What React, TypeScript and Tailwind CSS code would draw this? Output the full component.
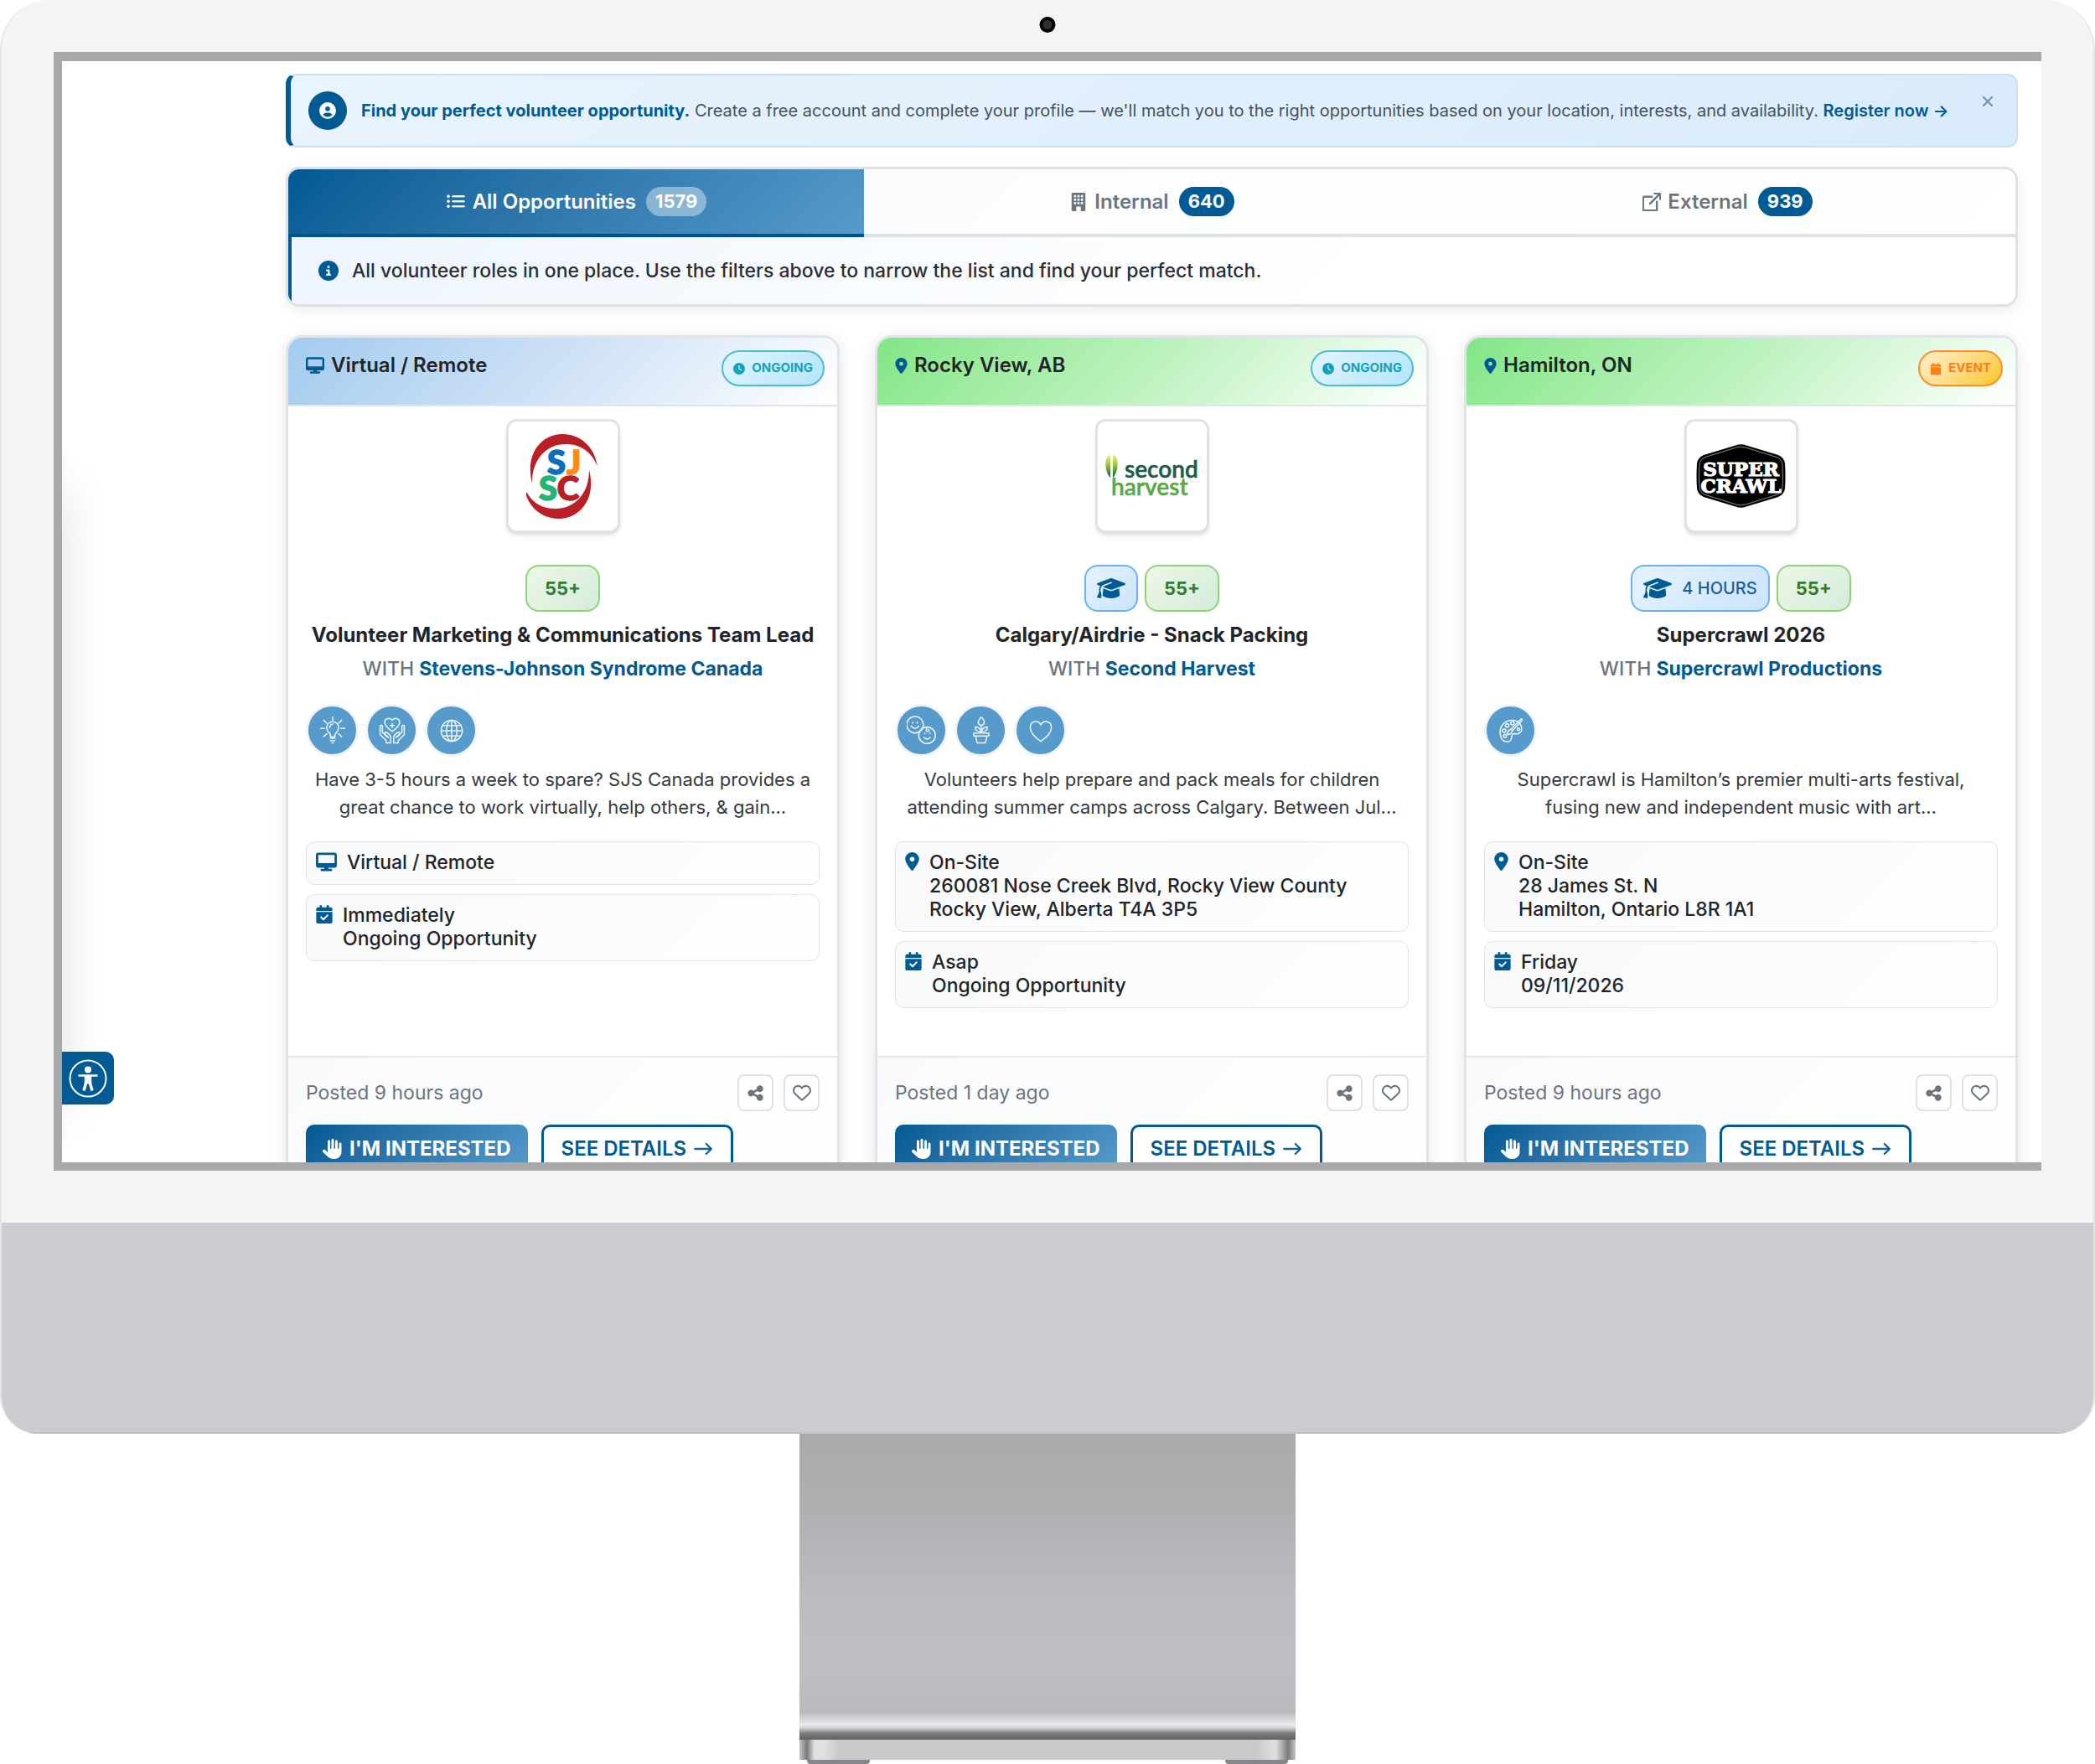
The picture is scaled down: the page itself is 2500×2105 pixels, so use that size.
import type { ReactNode } from 'react'
import {
  FaCalendar,
  FaCalendarCheck,
  FaCircleInfo,
  FaCircleUser,
  FaClock,
  FaDesktop,
  FaGraduationCap,
  FaHand,
  FaLocationDot,
  FaRegHeart,
  FaShareNodes,
} from 'react-icons/fa6'
import { BsArrowRight, BsBoxArrowUpRight, BsBuildingFill, BsListUl } from 'react-icons/bs'
import { X } from 'lucide-react'

type CauseName = 'idea' | 'care' | 'globe' | 'kids' | 'plant' | 'heart' | 'art'

interface Opportunity {
  place: string
  remote: boolean
  kind: 'ongoing' | 'event'
  logo: ReactNode
  training?: string
  title: string
  org: string
  causes: CauseName[]
  summary: string
  where: string[]
  when: string[]
  posted: string
}

function SjscLogo() {
  return (
    <svg viewBox="0 0 88 101" className="w-[88px]" role="img" aria-label="SJSC">
      <path
        d="M7 58C-2 24 18 0 43 0c22 0 38 15 42 38C77 20 64 12 47 12 24 12 7 30 7 58z"
        fill="#b91f24"
      />
      <path
        d="M7 58C-2 24 18 0 43 0c22 0 38 15 42 38C77 20 64 12 47 12 24 12 7 30 7 58z"
        fill="#b91f24"
        transform="rotate(180 41 50.5)"
      />
      <g fontFamily="Lato, sans-serif" fontWeight="900" fontSize="40" textAnchor="middle" strokeWidth="1.500">
        <text x="36" y="48" fill="#0b6fbd" stroke="#0b6fbd">S</text>
        <text x="57" y="48" fill="#ff8c1a" stroke="#ff8c1a">J</text>
        <text x="26" y="79" fill="#22b573" stroke="#22b573">S</text>
        <text x="50" y="79" fill="#b91f24" stroke="#b91f24">C</text>
      </g>
    </svg>
  )
}

function SecondHarvestLogo() {
  return (
    <svg viewBox="0 0 116 56" className="w-[116px]" role="img" aria-label="Second Harvest">
      <defs>
        <linearGradient id="leaf" x1="0" y1="0" x2="0" y2="1">
          <stop offset="0" stopColor="#f0ec8a" />
          <stop offset="0.4" stopColor="#a5c93c" />
          <stop offset="1" stopColor="#0c5a44" />
        </linearGradient>
      </defs>
      <path d="M8 3C0 3 1 24 8 30z" fill="url(#leaf)" />
      <path d="M11 3c8 0 7 21 0 27z" fill="url(#leaf)" />
      <g fontFamily="Lato, sans-serif" fontWeight="600" fontSize="28">
        <text x="25" y="30" fill="#1d5c45" stroke="#1d5c45" strokeWidth="0.5">
          second
        </text>
        <text x="9" y="51" fill="#5aa947" stroke="#5aa947" strokeWidth="0.5">
          harvest
        </text>
      </g>
    </svg>
  )
}

function SupercrawlLogo() {
  return (
    <svg viewBox="0 0 107 76" className="w-[107px]" role="img" aria-label="Super Crawl">
      <path
        d="M47 1.500Q53.500 -1 60 1.500L98 13Q105 16 106 23Q107 38 106 53Q105 60 98 63L60 74.500Q53.500 77 47 74.500L9 63Q2 60 1 53Q0 38 1 23Q2 16 9 13Z"
        fill="#000"
      />
      <path
        d="M48 4Q53.500 2 59 4L96 15.500Q102 18 103 24Q104 38 103 52Q102 58 96 60.500L59 72Q53.500 74 48 72L11 60.500Q5 58 4 52Q3 38 4 24Q5 18 11 15.500Z"
        fill="none"
        stroke="#8a8a8a"
        strokeWidth="1"
      />
      <g
        fontFamily="DejaVu Serif, serif"
        fontWeight="700"
        fontSize="23"
        textAnchor="middle"
        fill="#fff"
        stroke="#fff"
        strokeWidth="1.200"
      >
        <text x="53.500" y="38">SUPER</text>
        <text x="53.500" y="58">CRAWL</text>
      </g>
    </svg>
  )
}

const causePaths: Record<CauseName, ReactNode> = {
  idea: (
    <>
      <path d="M16 24v-2c0-3-5-5-5-10a8 8 0 0 1 16 0c0 5-5 7-5 10v2z" transform="translate(-1 2)" />
      <path d="M15 28h6M15 31h6M17 34h2M14 14q0-4 4-5" />
      <path d="M18 0v4M2 15h5M29 15h5M6 4l4 4M30 4l-4 4M6 26l4-4M30 26l-4-4" />
    </>
  ),
  care: (
    <>
      <path d="M18 19c-4-3-10-7-10-12a5.500 5.500 0 0 1 10-3 5.500 5.500 0 0 1 10 3c0 5-6 9-10 12z" />
      <path d="M18 8.500v5M15.500 11h5" />
      <path d="M2 11q2-1 3 1v8l6 6M2 11v12l8 8v3h6v-7q0-4-6-7-3 0-1 3l4 4" />
      <path d="M34 11q-2-1-3 1v8l-6 6M34 11v12l-8 8v3h-6v-7q0-4 6-7 3 0 1 3l-4 4" />
    </>
  ),
  globe: (
    <>
      <circle cx="18" cy="18" r="14" />
      <ellipse cx="18" cy="18" rx="7" ry="14" />
      <path d="M18 4v28M4 18h28M6.500 11h23M6.500 25h23" />
    </>
  ),
  kids: (
    <>
      <circle cx="9" cy="10" r="11" />
      <path d="M6 7v1M12 7v1M4 12q5 6 10 0" />
      <circle cx="25" cy="24" r="11" />
      <path d="M22 21v1M29 21v1M21 27q4 4 8 0M25 14q-3 4 1 5 3-1 1-3" />
    </>
  ),
  plant: (
    <>
      <path d="M8 21h20v4H8zM10.500 25l2 9h11l2-9M18 21V11" />
      <path d="M18 11q-8-3 0-11 8 8 0 11zM18 19q-8 1-8-6 6 0 8 6q2-6 8-6 0 7-8 6" />
    </>
  ),
  heart: <path d="M18 32C9 26 4 20 4 13.500c0-9 11-10 14-3 3-7 14-6 14 3C32 20 27 26 18 32z" />,
  art: (
    <>
      <path d="M16 32c-6 2-11-1-12-9C2 12 10 4 20 4c8 0 13 6 12 13-1 6-6 5-10 5-5 0-1 8-6 10z" />
      <circle cx="13" cy="11" r="2.300" />
      <circle cx="20" cy="8" r="2.300" />
      <circle cx="9" cy="18" r="2.300" />
      <circle cx="10" cy="25" r="2" />
      <circle cx="28" cy="16" r="1.600" />
      <path d="M32 2L18 16l2 2L33 4zM18 16q-4 1-5 7 6 0 7-5" />
    </>
  ),
}

const opportunities: Opportunity[] = [
  {
    place: 'Virtual / Remote',
    remote: true,
    kind: 'ongoing',
    logo: <SjscLogo />,
    title: 'Volunteer Marketing & Communications Team Lead',
    org: 'Stevens-Johnson Syndrome Canada',
    causes: ['idea', 'care', 'globe'],
    summary: 'Have 3-5 hours a week to spare? SJS Canada provides a great chance to work virtually, help others, & gain...',
    where: ['Virtual / Remote'],
    when: ['Immediately', 'Ongoing Opportunity'],
    posted: 'Posted 9 hours ago',
  },
  {
    place: 'Rocky View, AB',
    remote: false,
    kind: 'ongoing',
    logo: <SecondHarvestLogo />,
    training: '',
    title: 'Calgary/Airdrie - Snack Packing',
    org: 'Second Harvest',
    causes: ['kids', 'plant', 'heart'],
    summary: 'Volunteers help prepare and pack meals for children attending summer camps across Calgary. Between Jul...',
    where: ['On-Site', '260081 Nose Creek Blvd, Rocky View County', 'Rocky View, Alberta T4A 3P5'],
    when: ['Asap', 'Ongoing Opportunity'],
    posted: 'Posted 1 day ago',
  },
  {
    place: 'Hamilton, ON',
    remote: false,
    kind: 'event',
    logo: <SupercrawlLogo />,
    training: '4 HOURS',
    title: 'Supercrawl 2026',
    org: 'Supercrawl Productions',
    causes: ['art'],
    summary: 'Supercrawl is Hamilton’s premier multi-arts festival, fusing new and independent music with art...',
    where: ['On-Site', '28 James St. N', 'Hamilton, Ontario L8R 1A1'],
    when: ['Friday', '09/11/2026'],
    posted: 'Posted 9 hours ago',
  },
]

function RegisterBanner() {
  return (
    <div className="flex items-center rounded-xl border-2 border-l-[6px] border-[#c3e1f7] border-l-[#005a93] bg-linear-135 from-[#e8f4fe] to-[#d9ebfa] py-[19px] pl-[21px] pr-6">
      <span className="flex size-[46px] shrink-0 items-center justify-center rounded-full bg-[#005a93] text-white">
        <FaCircleUser className="size-5" />
      </span>
      <p className="ml-[17px] flex-1 text-[20px] leading-8 text-[#45525f]">
        <strong className="font-bold text-[#005a93]">Find your perfect volunteer opportunity.</strong>{' '}
        Create a free account and complete your profile — we'll match you to the right opportunities
        based on your location, interests, and availability.{' '}
        <a href="#register" className="font-semibold text-[#005a93]">
          Register now →
        </a>
      </p>
      <button type="button" aria-label="Dismiss" className="self-start pt-[2px] text-[#6f93b8]">
        <X className="size-5" strokeWidth={2.5} />
      </button>
    </div>
  )
}

function Tabs() {
  const idle = 'flex items-center justify-center gap-2 border-b-4 border-[#dee2e6] text-[#6c757d]'
  const count = 'ml-1 rounded-full bg-[#005a93] px-[11px] text-[22px] leading-[35px] font-bold text-white'

  return (
    <div className="mt-[23px] overflow-hidden rounded-2xl border-3 border-[#dee2e6] bg-white shadow-[0_4px_16px_rgba(0,0,0,0.08)]">
      <div className="grid h-[81px] grid-cols-3 bg-linear-135 from-[#fafbfc] to-white text-[24px] font-semibold">
        <button
          type="button"
          className="flex items-center justify-center gap-2 border-b-4 border-[#00528a] bg-linear-135 from-[#005a93] to-[#559bcb] text-white"
        >
          <BsListUl className="size-6" strokeWidth={0.5} />
          All Opportunities
          <span className="ml-1 rounded-full bg-white/40 px-[11px] text-[22px] leading-[35px] font-bold">
            1579
          </span>
        </button>
        <button type="button" className={idle}>
          <BsBuildingFill className="size-[22px]" />
          Internal
          <span className={count}>640</span>
        </button>
        <button type="button" className={idle}>
          <BsBoxArrowUpRight className="size-[22px]" strokeWidth={0.8} />
          External
          <span className={count}>939</span>
        </button>
      </div>
      <div className="flex h-20 items-center gap-4 border-l-4 border-[#005a93] bg-linear-135 from-[#eef5fe] to-white to-60% pl-8">
        <FaCircleInfo className="size-6 text-[#005a93]" />
        <p className="text-[23px] font-medium text-[#2b2f33]">
          All volunteer roles in one place. Use the filters above to narrow the list and find your
          perfect match.
        </p>
      </div>
    </div>
  )
}

function KindBadge({ kind }: { kind: Opportunity['kind'] }) {
  if (kind === 'event') {
    return (
      <span className="flex h-[43px] items-center gap-2 rounded-full border-2 border-[#fd8f2f] bg-linear-135 from-[#fff0c8] to-[#ffc60d] px-3 text-[15px] font-bold text-[#fd7e14]">
        <FaCalendar className="size-[14px]" />
        EVENT
      </span>
    )
  }
  return (
    <span className="flex h-[43px] items-center gap-2 rounded-full border-2 border-[#4dbccd] bg-linear-135 from-[#e1f5fe] to-[#b3e5fc] px-3 text-[15px] font-bold text-[#17a2b8]">
      <FaClock className="size-[14px]" />
      ONGOING
    </span>
  )
}

function InfoBox({ icon, lines }: { icon: ReactNode; lines: string[] }) {
  return (
    <div className="flex gap-3 rounded-[10px] border border-[#dfe3e8] bg-linear-135 from-[#f8f9fa] to-[#fefefe] px-[11px] pt-[10px] pb-3 text-[23px] leading-7 font-medium text-[#212529]">
      <span className="pt-[2px] text-[#005a93]">{icon}</span>
      <div>
        {lines.map((line) => (
          <p key={line}>{line}</p>
        ))}
      </div>
    </div>
  )
}

function OpportunityCard({ item }: { item: Opportunity }) {
  return (
    <article className="flex flex-col overflow-hidden rounded-[20px] border-3 border-[#e1e5ea] bg-white shadow-[0_4px_20px_rgba(0,0,0,0.1)]">
      <header
        className={
          item.remote
            ? 'flex h-[82px] items-start border-b-2 border-[#e1e5ea] bg-linear-135 from-[#a3cbef] via-[#cfe2f6] to-white pt-[15px] pl-[21px] pr-[15px]'
            : 'flex h-[82px] items-start border-b-2 border-[#e1e5ea] bg-linear-135 from-[#82e686] via-[#bdf2bf] to-white pt-[15px] pl-[21px] pr-[15px]'
        }
      >
        <h3 className="flex flex-1 items-center gap-2 text-[24px] leading-9 font-semibold text-[#212529]">
          {item.remote ? (
            <FaDesktop className="h-5 w-[22px] text-[#005a93]" />
          ) : (
            <FaLocationDot className="h-[19px] w-[15px] text-[#005a93]" />
          )}
          {item.place}
        </h3>
        <KindBadge kind={item.kind} />
      </header>

      <div className="flex flex-1 flex-col px-[21px] pt-[15px] pb-[57px]">
        <div className="flex size-[136px] items-center justify-center self-center rounded-xl border-3 border-[#dfe3e8] bg-white shadow-md">
          {item.logo}
        </div>

        {/* Requirements */}
        <div className="mt-[38px] flex justify-center gap-2">
          {item.training !== undefined && (
            <span className="flex h-14 items-center gap-3 rounded-2xl border-2 border-[#66b2ff] bg-linear-135 from-[#e5f3ff] to-[#cce4ff] px-[13px] text-[20px] font-medium text-[#1a5f99]">
              <FaGraduationCap className="h-[30px] w-[34px] text-[#005a93]" />
              {item.training}
            </span>
          )}
          <span className="flex h-14 items-center rounded-2xl border-2 border-[#8fd47a] bg-linear-135 from-[#eef6e6] to-[#d4ecdb] px-[21px] text-[22px] font-bold text-[#2e7d32]">
            55+
          </span>
        </div>

        <h2 className="mt-3 text-center text-[24px] leading-8 font-bold whitespace-nowrap text-[#212529]">
          {item.title}
        </h2>
        <p className="mt-2 text-center text-[23px] leading-8 font-medium text-[#6c757d]">
          WITH{' '}
          <a href="#organization" className="font-bold text-[#005a93]">
            {item.org}
          </a>
        </p>

        {/* Causes */}
        <div className="mt-[26px] flex gap-2">
          {item.causes.map((cause) => (
            <span
              key={cause}
              className="flex size-[63px] items-center justify-center rounded-full border-3 border-[#f1f5f9] bg-[#579bcc]"
            >
              <svg
                viewBox="-2 -2 40 40"
                className="size-9"
                fill="none"
                stroke="#eaf4fb"
                strokeWidth="1.700"
                strokeLinecap="round"
                strokeLinejoin="round"
                aria-hidden="true"
              >
                {causePaths[cause]}
              </svg>
            </span>
          ))}
        </div>

        <p className="mt-[11px] px-2 text-center text-[22px] leading-[33px] text-[#343a40]">{item.summary}</p>

        <div className="mt-6 flex flex-col gap-[11px]">
          <InfoBox
            icon={
              item.remote ? (
                <FaDesktop className="h-[23px] w-[25px]" />
              ) : (
                <FaLocationDot className="h-[22px] w-[17px]" />
              )
            }
            lines={item.where}
          />
          <InfoBox icon={<FaCalendarCheck className="h-[22px] w-5" />} lines={item.when} />
        </div>
      </div>

      <footer className="border-t-2 border-[#e5e8ec] bg-linear-135 from-[#f8fafc] to-white px-[21px] pt-5 pb-5">
        <div className="flex items-center gap-3 text-[#6c757d]">
          <span className="flex-1 text-[23px]">{item.posted}</span>
          <button
            type="button"
            aria-label="Share"
            className="flex h-11 w-[43px] items-center justify-center rounded-lg border-2 border-[#dee2e6] bg-white"
          >
            <FaShareNodes className="size-[21px]" />
          </button>
          <button
            type="button"
            aria-label="Save"
            className="flex h-11 w-[43px] items-center justify-center rounded-lg border-2 border-[#dee2e6] bg-white"
          >
            <FaRegHeart className="size-[22px]" />
          </button>
        </div>
        <div className="mt-4 flex gap-4 text-[24px] font-bold">
          <button
            type="button"
            className="flex h-[58px] items-center gap-2 rounded-[10px] bg-linear-135 from-[#005a93] to-[#559bcb] px-5 text-white"
          >
            <FaHand className="size-6" />
            I'M INTERESTED
          </button>
          <a
            href="#details"
            className="flex h-[58px] items-center gap-2 rounded-[10px] border-3 border-[#005a93] bg-white px-[21px] font-semibold text-[#005a93]"
          >
            SEE DETAILS
            <BsArrowRight className="size-6" strokeWidth={0.6} />
          </a>
        </div>
      </footer>
    </article>
  )
}

function AccessibilityButton() {
  return (
    <button
      type="button"
      aria-label="Accessibility options"
      className="absolute bottom-[69px] left-0 flex h-[63px] w-[62px] items-center justify-center rounded-r-[10px] bg-[#005a93]"
    >
      <svg viewBox="0 0 46 46" className="size-[46px]" aria-hidden="true">
        <circle cx="23" cy="23" r="21.500" fill="none" stroke="#fff" strokeWidth="2" />
        <circle cx="23" cy="12.500" r="4" fill="#fff" />
        <path
          d="M12.500 19.500h21M20 20h6v8h-6z"
          fill="#fff"
          stroke="#fff"
          strokeWidth="2.500"
          strokeLinecap="round"
        />
        <path d="M21 27l-3 10.500M25 27l3 10.500" stroke="#fff" strokeWidth="3.500" />
      </svg>
    </button>
  )
}

export default function App() {
  return (
    <div className="w-full bg-white font-['Inter',sans-serif]">
      {/* Monitor */}
      <div className="overflow-hidden rounded-t-[60px] rounded-b-[45px] border-x-2 border-[#e3e4e5]">
        <div className="relative bg-[#f4f4f4] px-[62px] py-[62px]">
          <span className="absolute top-5 left-1/2 size-[19px] -translate-x-1/2 rounded-full border-4 border-black bg-[#2d2f31]" />
          <main className="relative aspect-[2372/1335] overflow-hidden border-t-[11px] border-b-[10px] border-l-[10px] border-[#a8a8a8] bg-white pt-[15px] pr-7 pl-[267px]">
            {/* Collapsed side panel, only its shadow shows */}
            <div className="absolute bottom-16 -left-10 h-[740px] w-10 shadow-[0_0_60px_rgba(0,0,0,0.14)]" />
            <RegisterBanner />
            <Tabs />
            <div className="mt-[34px] grid grid-cols-3 gap-[42px]">
              {opportunities.map((item) => (
                <OpportunityCard key={item.title} item={item} />
              ))}
            </div>
            <AccessibilityButton />
          </main>
        </div>
        <div className="h-[252px] border-b-2 border-[#bfc1c3] bg-[#cacccf]" />
      </div>

      {/* Stand */}
      <div className="mx-auto w-[23.7%]">
        <div className="h-[365px] bg-[linear-gradient(180deg,#a8aaac_0%,#aeb0b2_25%,#b4b6ba_38%,#babcbf_54%,#bdbfc2_75%,#b8babd_91%,#e9eaec_95%,#d5d6d8_96%,#77797b_98%,#5f6163_100%)]" />
        <div className="h-6 bg-[linear-gradient(90deg,#c4c6c8_0%,#77797b_1.500%,#dfe0e2_3%,#dfe0e2_5%,#c8c9cb_8%,#c8c9cb_92%,#dfe0e2_96%,#77797b_98.500%,#c4c6c8_100%)]" />
        <div className="flex justify-between px-[9px]">
          <span className="h-[5px] w-[75px] rounded-b-sm bg-[#85878a]" />
          <span className="h-[5px] w-[75px] rounded-b-sm bg-[#85878a]" />
        </div>
      </div>
    </div>
  )
}
